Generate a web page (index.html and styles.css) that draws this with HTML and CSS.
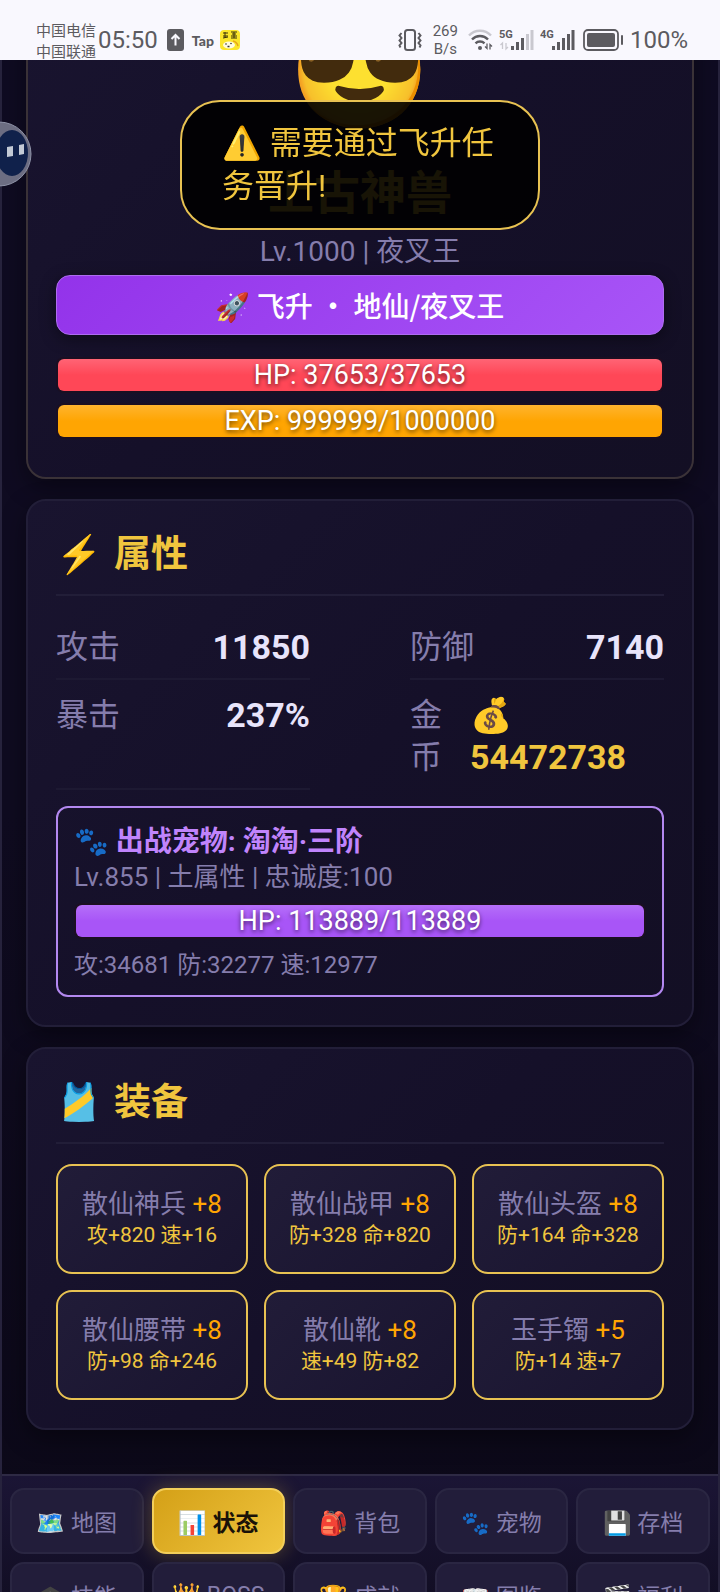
FILE: index.html
```html
<!DOCTYPE html>
<html lang="zh-CN">
<head>
    <meta charset="UTF-8">
    <meta name="viewport" content="width=device-width, initial-scale=1.0">
    <title>状态</title>
    <link rel="stylesheet" href="styles.css">
</head>
<body>

    <header class="status-bar">
        <div class="carriers">
            <div>中国电信</div>
            <div>中国联通</div>
        </div>
        <span class="clock">05:50</span>
        <svg class="icon-upload" width="17" height="22" viewBox="0 0 17 22">
            <rect width="17" height="22" rx="3" fill="#5c5b60"/>
            <path d="M8.500 16.500V6M4.500 10L8.500 6l4 4" fill="none" stroke="#f9f8fe" stroke-width="2"/>
        </svg>
        <span class="tap">Tap</span>
        <svg class="icon-app" width="20" height="20" viewBox="0 0 20 20">
            <rect width="20" height="20" rx="4" fill="#fbe62a"/>
            <path d="M3 3h5M5 2v6M3 6h5M3 8l5-1M11 2h6M12 4h4M11 6h6M14 2v6M11 8h6" stroke="#3a330a" stroke-width="1" fill="none"/>
            <ellipse cx="9" cy="15" rx="6" ry="3.500" fill="#fffbe0"/>
            <path d="M13 11q4 1 5 5" stroke="#e8a51c" stroke-width="1.500" fill="none"/>
            <circle cx="6" cy="14" r="0.800" fill="#333"/>
            <circle cx="11" cy="13.500" r="0.800" fill="#333"/>
            <path d="M7.500 16.500h2" stroke="#333" stroke-width="1.500"/>
        </svg>

        <svg class="icon-vibrate" width="26" height="24" viewBox="0 0 26 24" fill="none" stroke="#5c5b60">
            <rect x="8" y="2" width="10" height="20" rx="2.500" stroke-width="2"/>
            <path d="M4.500 5l-2 2.500 2 2.500-2 2.500 2 2.500-2 2.500 1 2M21.500 5l2 2.500-2 2.500 2 2.500-2 2.500 2 2.500-1 2" stroke-width="2"/>
        </svg>
        <div class="net-speed">
            <div>269</div>
            <div>B/s</div>
        </div>
        <svg class="icon-wifi" width="25" height="22" viewBox="0 0 25 22" fill="none" stroke-width="2.400">
            <path d="M1 6.500a15 15 0 0 1 22 0" stroke="#c9c8cf"/>
            <path d="M4 10.500a11 11 0 0 1 16 0M7.500 14.300a6.500 6.500 0 0 1 9 0" stroke="#5c5b60"/>
            <circle cx="12" cy="19" r="2" fill="#5c5b60"/>
            <path d="M19 14.500v5l-2-2M22 20.500v-5l2 2" stroke="#5c5b60" stroke-width="1.300"/>
        </svg>
        <svg class="icon-signal" width="35" height="22" viewBox="0 0 35 22">
            <text x="0" y="9" class="net-type">5G</text>
            <path d="M3.500 20v-6l-2 2M7 14v6l2-2" stroke="#c9c8cf" stroke-width="1.300" fill="none"/>
            <path d="M13.500 21v-4M18.500 21v-8M23.500 21V9" stroke="#5c5b60" stroke-width="3"/>
            <path d="M28.500 21V5M33 21V1" stroke="#c9c8cf" stroke-width="3"/>
        </svg>
        <svg class="icon-signal" width="35" height="22" viewBox="0 0 35 22">
            <text x="0" y="9" class="net-type">4G</text>
            <path d="M13.500 21v-4M18.500 21v-8M23.500 21V9M28.500 21V5M33 21V1" stroke="#5c5b60" stroke-width="3"/>
        </svg>
        <svg class="icon-battery" width="41" height="22" viewBox="0 0 41 22">
            <rect x="1" y="1" width="34" height="20" rx="4" fill="none" stroke="#5c5b60" stroke-width="1.800"/>
            <rect x="4" y="4" width="28" height="14" rx="2" fill="#5c5b60"/>
            <rect x="38" y="6" width="2" height="10" rx="1" fill="#5c5b60"/>
        </svg>
        <span class="battery-text">100%</span>
    </header>

    <div class="app">
        <main class="content">
            <section class="card profile">
                <div class="avatar">😎</div>
                <h1 class="player-name">上古神兽</h1>
                <p class="player-level">Lv.1000 | 夜叉王</p>
                <button class="ascend-btn">🚀 飞升 · 地仙/夜叉王</button>
                <div class="bar">
                    <div class="bar-fill hp" style="width: 100%"></div>
                    <span class="bar-text">HP: 37653/37653</span>
                </div>
                <div class="bar">
                    <div class="bar-fill exp" style="width: 100%"></div>
                    <span class="bar-text">EXP: 999999/1000000</span>
                </div>
            </section>

            <section class="card">
                <h2 class="card-title"><span>⚡</span> 属性</h2>
                <div class="stats">
                    <div class="stat">
                        <span class="stat-label">攻击</span>
                        <span class="stat-value">11850</span>
                    </div>
                    <div class="stat">
                        <span class="stat-label">防御</span>
                        <span class="stat-value">7140</span>
                    </div>
                    <div class="stat">
                        <span class="stat-label">暴击</span>
                        <span class="stat-value">237%</span>
                    </div>
                    <div class="stat stat-gold">
                        <span class="stat-label">金币</span>
                        <span class="stat-value">💰<br>54472738</span>
                    </div>
                </div>

                <div class="pet">
                    <h3 class="pet-name">🐾 出战宠物: 淘淘·三阶</h3>
                    <p class="pet-info">Lv.855 | 土属性 | 忠诚度:100</p>
                    <div class="bar">
                        <div class="bar-fill pet-hp" style="width: 100%"></div>
                        <span class="bar-text">HP: 113889/113889</span>
                    </div>
                    <p class="pet-stats">攻:34681 防:32277 速:12977</p>
                </div>
            </section>

            <section class="card">
                <h2 class="card-title"><span>🎽</span> 装备</h2>
                <div class="equips">
                    <div class="equip">
                        <div class="equip-name">散仙神兵 <span class="plus">+8</span></div>
                        <div class="equip-stats">攻+820 速+16</div>
                    </div>
                    <div class="equip">
                        <div class="equip-name">散仙战甲 <span class="plus">+8</span></div>
                        <div class="equip-stats">防+328 命+820</div>
                    </div>
                    <div class="equip">
                        <div class="equip-name">散仙头盔 <span class="plus">+8</span></div>
                        <div class="equip-stats">防+164 命+328</div>
                    </div>
                    <div class="equip">
                        <div class="equip-name">散仙腰带 <span class="plus">+8</span></div>
                        <div class="equip-stats">防+98 命+246</div>
                    </div>
                    <div class="equip">
                        <div class="equip-name">散仙靴 <span class="plus">+8</span></div>
                        <div class="equip-stats">速+49 防+82</div>
                    </div>
                    <div class="equip">
                        <div class="equip-name">玉手镯 <span class="plus">+5</span></div>
                        <div class="equip-stats">防+14 速+7</div>
                    </div>
                </div>
            </section>
        </main>

        <nav class="tabs">
            <button class="tab">🗺️ 地图</button>
            <button class="tab active">📊 状态</button>
            <button class="tab">🎒 背包</button>
            <button class="tab">🐾 宠物</button>
            <button class="tab">💾 存档</button>
            <button class="tab">🎓 技能</button>
            <button class="tab">👑 BOSS</button>
            <button class="tab">🏆 成就</button>
            <button class="tab">📖 图鉴</button>
            <button class="tab">🎬 福利</button>
        </nav>
    </div>

    <div class="toast" role="alert">⚠️ 需要通过飞升任务晋升!</div>

    <button class="float-ball" aria-label="悬浮球">
        <svg width="32" height="66" viewBox="0 0 32 66">
            <circle cx="-1" cy="33" r="32" fill="#6c6d82" stroke="#8f93a8" stroke-width="1"/>
            <ellipse cx="12" cy="32" rx="16" ry="23" fill="#10214b"/>
            <path d="M7 26l6-1v10l-6 1zM19 24l5-1v10l-5 1z" fill="#c3cad6"/>
        </svg>
    </button>

</body>
</html>
```
FILE: styles.css
```css
* {
    box-sizing: border-box;
    margin: 0;
    padding: 0;
}

body {
    font-family: Roboto, 'Noto Sans CJK SC', 'Noto Color Emoji', sans-serif;
    background: #0d0a1c;
    color: #e8e4fb;
    height: 100vh;
    overflow: hidden;
}

button {
    font-family: inherit;
    cursor: pointer;
}

/* phone status bar */
.status-bar {
    position: relative;
    z-index: 5;
    display: flex;
    align-items: center;
    height: 60px;
    padding: 20px 32px 0 36px;
    background: #f9f8fe;
    color: #5c5b60;
    overflow: hidden;
}

.carriers {
    padding-top: 3px;
    font-size: 15px;
    line-height: 21px;
}

.clock {
    margin-left: 2px;
    font-size: 24px;
}

.icon-upload {
    margin-left: 9px;
}

.tap {
    margin: 0 6px 0 8px;
    font: 900 14px Lato, sans-serif;
}

.icon-vibrate {
    margin-left: auto;
}

.net-speed {
    margin: 0 10px;
    font-size: 15px;
    line-height: 18px;
    text-align: center;
}

.icon-signal {
    margin-left: 6px;
}

.net-type {
    font: bold 11px Roboto, sans-serif;
    fill: #5c5b60;
}

.icon-battery {
    margin: 0 6px 0 8px;
}

.battery-text {
    font-size: 24px;
}

/* page */
.app {
    border: solid #27233d;
    border-width: 0 2px;
    background: linear-gradient(#0f0b22, #0f0b20 50%, #0b0817);
}

/* scrolled a little under the status bar */
.content {
    display: flex;
    flex-direction: column;
    gap: 20px;
    margin-top: -81px;
    padding: 0 24px 44px;
}

.card {
    padding: 28px;
    border: 2px solid #221e38;
    border-radius: 20px;
    background: linear-gradient(135deg, #19142f, #151029 50%, #130f24);
    box-shadow: 0 8px 24px rgba(0, 0, 0, 0.4);
}

.profile {
    border-color: #3a3237;
    text-align: center;
}

.avatar {
    margin-bottom: 32px;
    font-size: 115px;
    line-height: 124px;
}

.player-name {
    margin-bottom: 12px;
    font-size: 46px;
    line-height: 56px;
    color: #f0c53e;
}

.player-level {
    font-size: 28px;
    line-height: 38px;
    color: #857dac;
}

.ascend-btn {
    display: block;
    width: 100%;
    height: 60px;
    margin: 4px 0 22px;
    border: 1px solid #ae6cf0;
    border-radius: 14px;
    background: linear-gradient(135deg, #9333ea, #a855f7);
    box-shadow: 0 4px 16px rgba(0, 0, 0, 0.4);
    color: #fff;
    font-family: 'Noto Sans CJK SC', 'Noto Color Emoji', sans-serif;
    font-size: 28px;
    font-weight: 500;
}

.bar {
    position: relative;
    height: 36px;
    margin-bottom: 10px;
    padding: 2px;
    border-radius: 8px;
    background: #1b0f22;
}

.bar-fill {
    height: 100%;
    border-radius: 6px;
}

.hp {
    background: linear-gradient(#ff6475, #ff4757 50%);
}

.exp {
    background: linear-gradient(#ffb42e, #ffa502 50%);
}

.pet-hp {
    background: linear-gradient(#b56ff9, #a855f7 50%);
}

.bar-text {
    position: absolute;
    inset: 0;
    font-size: 27px;
    line-height: 36px;
    text-align: center;
    color: #fff;
    text-shadow: 0 2px 4px rgba(0, 0, 0, 0.6);
}

.card-title {
    display: flex;
    gap: 12px;
    margin-bottom: 20px;
    padding-bottom: 13px;
    border-bottom: 2px solid #221e38;
    font-size: 37px;
    line-height: 52px;
    color: #f0c53e;
}

.stats {
    display: grid;
    grid-template-columns: 1fr 1fr;
    gap: 4px 100px;
}

.stat {
    display: flex;
    justify-content: space-between;
    padding: 10px 0;
    border-bottom: 2px solid #1d1932;
    font-size: 32px;
    line-height: 42px;
}

.stat-label {
    color: #857dac;
}

.stat-value {
    font-size: 34px;
    font-weight: bold;
}

.stat-gold {
    justify-content: flex-start;
    gap: 28px;
    border-bottom-color: transparent;
}

.stat-gold .stat-label {
    width: 1em;
}

.stat-gold .stat-value {
    color: #f0c53e;
}

.pet {
    margin-top: 16px;
    padding: 16px 16px 14px;
    border: 2px solid #b388f0;
    border-radius: 12px;
}

.pet-name {
    font-size: 28px;
    line-height: 35px;
    color: #c084fc;
}

.pet-info {
    margin-bottom: 8px;
    font-size: 26px;
    line-height: 36px;
    color: #857dac;
}

.pet-stats {
    font-size: 24px;
    line-height: 32px;
    color: #857dac;
}

.equips {
    display: grid;
    grid-template-columns: repeat(3, 1fr);
    gap: 16px;
}

.equip {
    padding: 22px 0;
    border: 2px solid #e8c252;
    border-radius: 16px;
    background: linear-gradient(135deg, #211c38, #19142f);
    text-align: center;
}

.equip-name {
    font-size: 26px;
    line-height: 33px;
    color: #857dac;
}

.plus {
    color: #ffa502;
}

.equip-stats {
    font-size: 21px;
    line-height: 29px;
    color: #f0c53e;
}

/* bottom tabs */
.tabs {
    display: grid;
    grid-template-columns: repeat(5, 1fr);
    gap: 8px;
    padding: 12px 8px;
    border-top: 2px solid #2e2a44;
    background: linear-gradient(#1b1535, #120e24 120px);
}

.tab {
    height: 66px;
    border: 2px solid #2a2642;
    border-radius: 14px;
    background: #221d3a;
    color: #857dac;
    font-size: 23px;
    white-space: nowrap;
}

.tab.active {
    border-color: #f3cf5a;
    background: linear-gradient(135deg, #d4a017, #f0c53e);
    box-shadow: 0 0 20px rgba(240, 197, 62, 0.3);
    color: #1a1208;
    font-weight: bold;
}

/* overlays */
.toast {
    position: fixed;
    z-index: 10;
    top: 100px;
    left: 25%;
    right: 25%;
    padding: 20px 40px;
    border: 2px solid #e8c252;
    border-radius: 40px;
    background: rgba(0, 0, 0, 0.9);
    color: #f0c53e;
    font-size: 32px;
    line-height: 43px;
}

.float-ball {
    position: fixed;
    z-index: 10;
    top: 121px;
    left: 0;
    border: none;
    background: none;
}

.float-ball svg {
    display: block;
}
```
